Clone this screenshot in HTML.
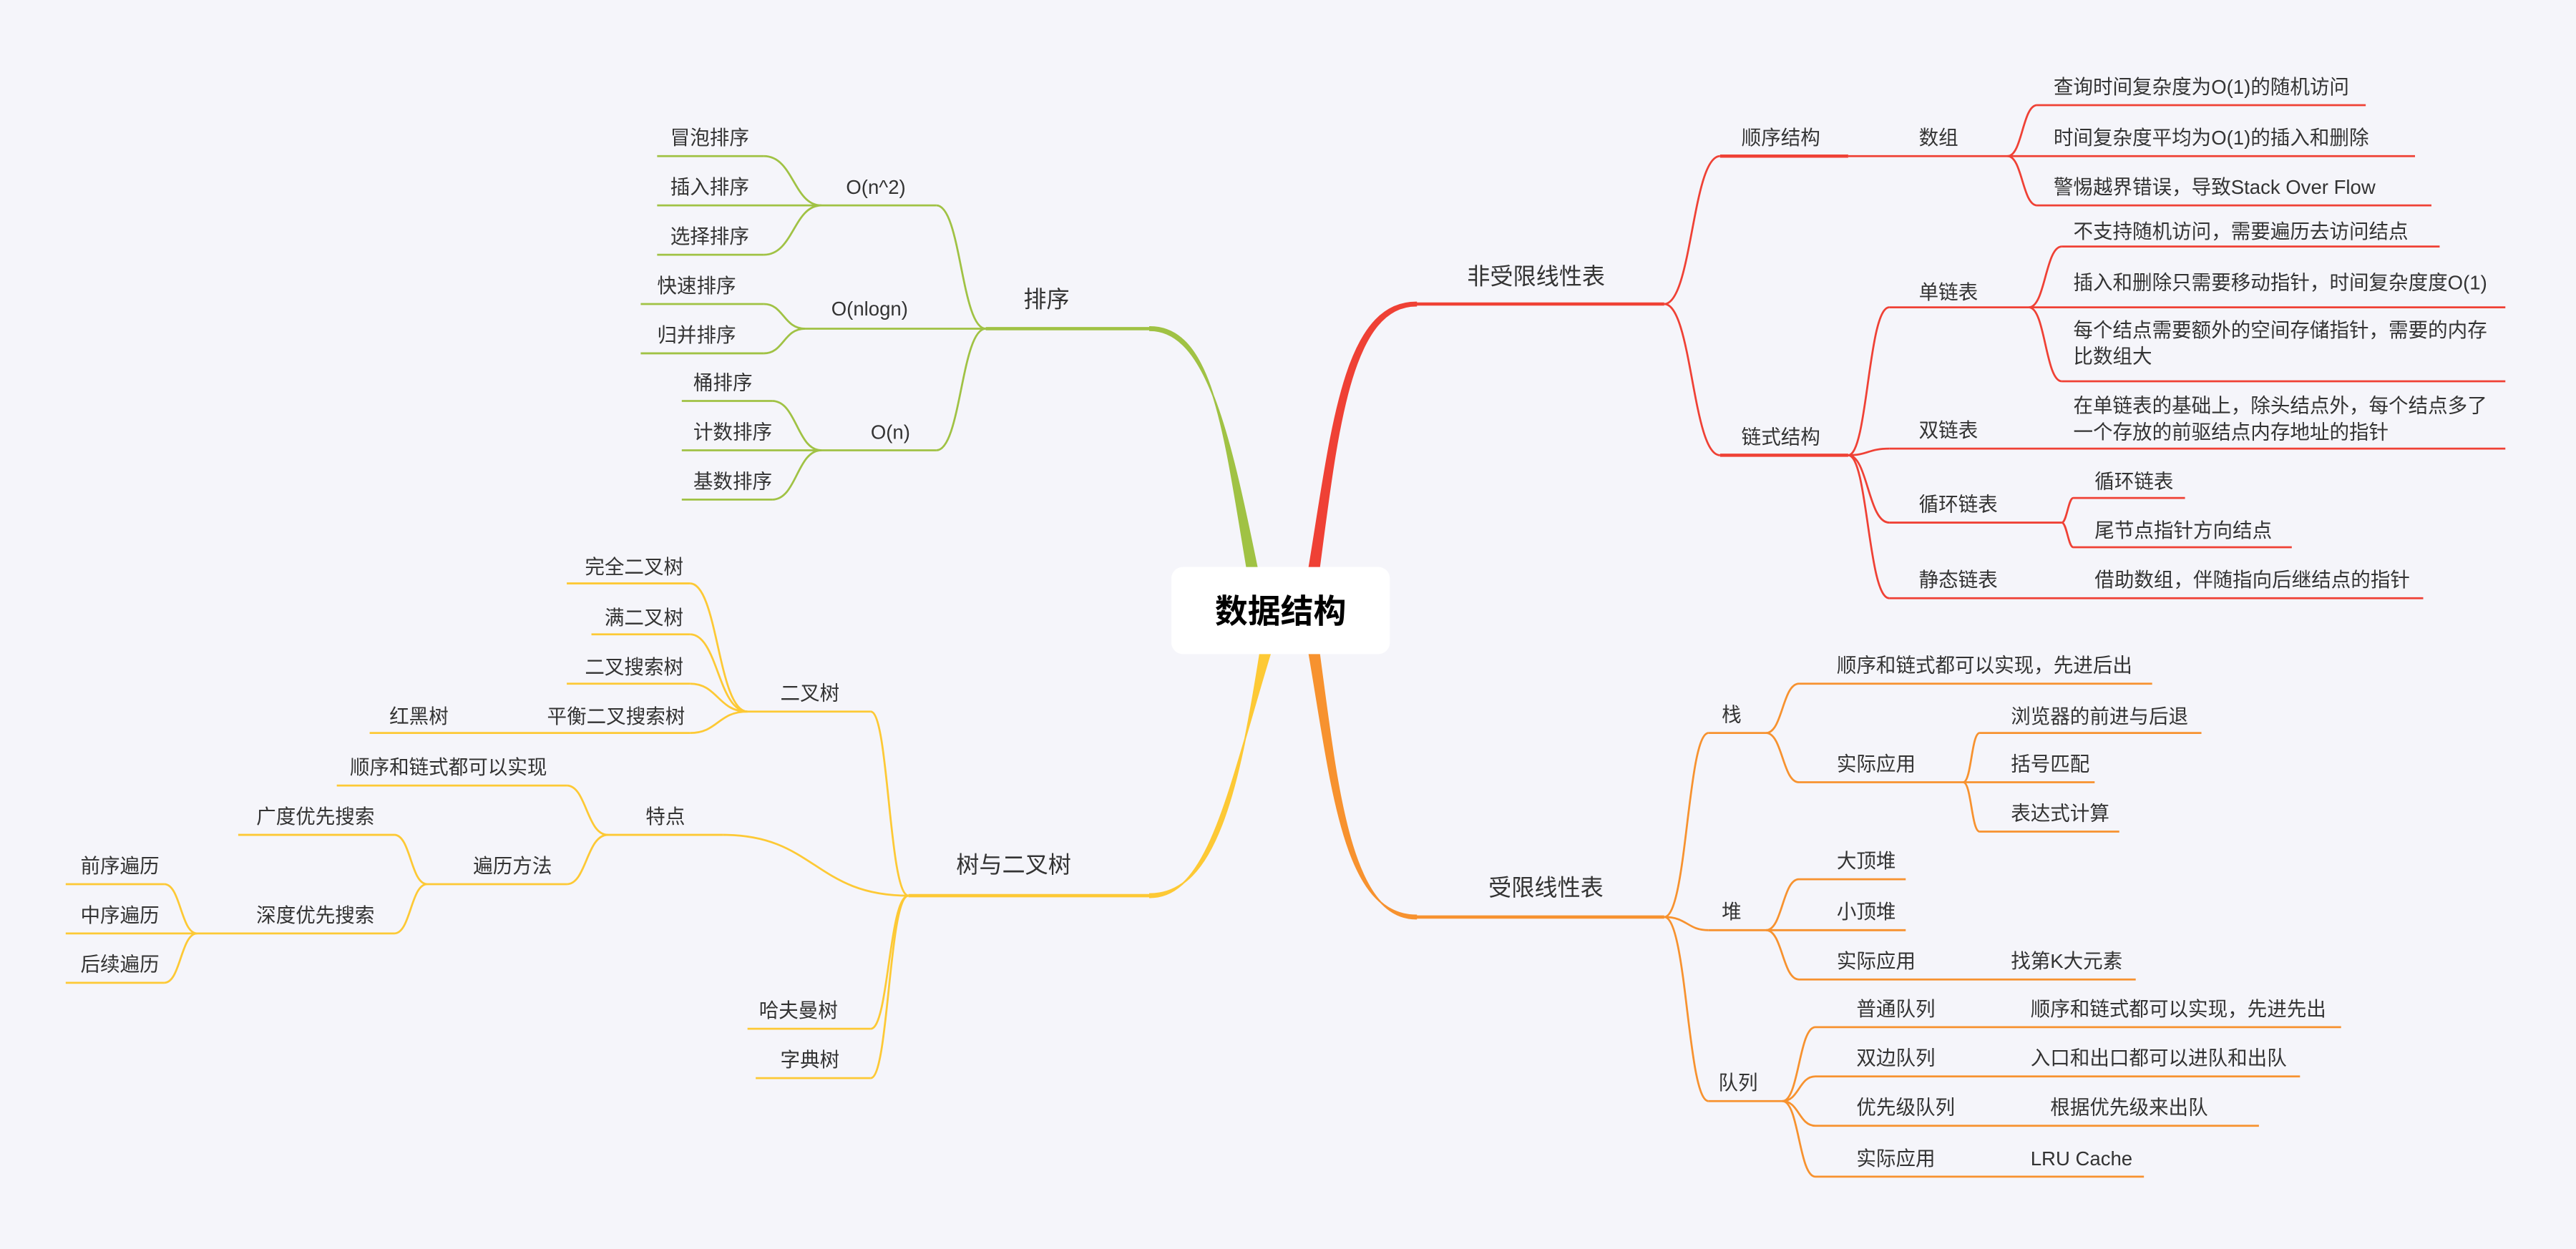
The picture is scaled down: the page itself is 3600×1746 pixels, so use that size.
<!DOCTYPE html>
<html><head><meta charset="utf-8"><style>
html,body{margin:0;padding:0;background:#f5f5fa;}
svg{display:block}
text{font-family:"Liberation Sans","Noto Sans CJK SC",sans-serif;font-size:12px;fill:#333}
.m{font-size:14px}
.r path,.r line{stroke:#ef4135}
.o path,.o line{stroke:#f7922f}
.g path,.g line{stroke:#a0c244}
.y path,.y line{stroke:#fdc935}
path,line{fill:none;stroke-width:1.2}
.t{stroke-width:2}
</style></head><body>
<svg width="3600" height="1746" viewBox="0 0 1568 760" preserveAspectRatio="none" xmlns="http://www.w3.org/2000/svg">
<rect width="1568" height="760" fill="#f5f5fa"/>

<!-- RED -->
<g class="r">
<path d="M797 345C811 260 818 184 862 184L862 186C822 186 814 262 803 345Z" style="fill:#ef4135;stroke-width:1"/>
<line class="t" x1="860" y1="185" x2="1013" y2="185"/>
<path d="M1013 185C1030 185 1030 95 1047 95"/>
<path d="M1013 185C1030 185 1030 277 1047 277"/>
<line class="t" x1="1047" y1="95" x2="1125" y2="95"/>
<line x1="1125" y1="95" x2="1222" y2="95"/>
<line class="t" x1="1047" y1="277" x2="1125" y2="277"/>
<path d="M1222 95C1231 95 1231 64 1240 64"/>
<path d="M1222 95C1231 95 1231 125 1240 125"/>
<line x1="1240" y1="64" x2="1440" y2="64"/>
<line x1="1222" y1="95" x2="1470" y2="95"/>
<line x1="1240" y1="125" x2="1480" y2="125"/>
<path d="M1125 277C1137 277 1137 187 1150 187"/>
<path d="M1125 277C1137 277 1137 273 1150 273"/>
<path d="M1125 277C1137 277 1137 318 1150 318"/>
<path d="M1125 277C1137 277 1137 364 1150 364"/>
<line x1="1150" y1="187" x2="1235" y2="187"/>
<line x1="1150" y1="273" x2="1525" y2="273"/>
<line x1="1150" y1="318" x2="1255" y2="318"/>
<line x1="1150" y1="364" x2="1475" y2="364"/>
<path d="M1235 187C1245 187 1245 150 1255 150"/>
<path d="M1235 187C1245 187 1245 232 1255 232"/>
<line x1="1255" y1="150" x2="1485" y2="150"/>
<line x1="1235" y1="187" x2="1525" y2="187"/>
<line x1="1255" y1="232" x2="1525" y2="232"/>
<path d="M1255 318C1258 318 1259 303 1262 303"/>
<path d="M1255 318C1258 318 1259 333 1262 333"/>
<line x1="1262" y1="303" x2="1330" y2="303"/>
<line x1="1262" y1="333" x2="1395" y2="333"/>
</g>

<!-- ORANGE -->
<g class="o">
<path d="M797 398C811 480 818 557 862 557L862 559C822 559 814 480 803 398Z" style="fill:#f7922f;stroke-width:1"/>
<line class="t" x1="860" y1="558" x2="1013" y2="558"/>
<path d="M1013 558C1027 558 1027 446 1040 446"/>
<path d="M1013 558C1027 558 1027 566 1040 566"/>
<path d="M1013 558C1027 558 1027 670 1040 670"/>
<line x1="1040" y1="446" x2="1075" y2="446"/>
<line x1="1040" y1="566" x2="1075" y2="566"/>
<line x1="1040" y1="670" x2="1085" y2="670"/>
<path d="M1075 446C1085 446 1085 416 1095 416"/>
<path d="M1075 446C1085 446 1085 476 1095 476"/>
<line x1="1095" y1="416" x2="1310" y2="416"/>
<line x1="1095" y1="476" x2="1275" y2="476"/>
<path d="M1195 476C1200 476 1200 446 1205 446"/>
<path d="M1195 476C1200 476 1200 506 1205 506"/>
<line x1="1205" y1="446" x2="1340" y2="446"/>
<line x1="1205" y1="506" x2="1290" y2="506"/>
<path d="M1075 566C1085 566 1085 535 1095 535"/>
<path d="M1075 566C1085 566 1085 596 1095 596"/>
<line x1="1095" y1="535" x2="1160" y2="535"/>
<line x1="1075" y1="566" x2="1160" y2="566"/>
<line x1="1095" y1="596" x2="1300" y2="596"/>
<path d="M1085 670C1095 670 1095 625 1105 625"/>
<path d="M1085 670C1095 670 1095 655 1105 655"/>
<path d="M1085 670C1095 670 1095 685 1105 685"/>
<path d="M1085 670C1095 670 1095 716 1105 716"/>
<line x1="1105" y1="625" x2="1425" y2="625"/>
<line x1="1105" y1="655" x2="1400" y2="655"/>
<line x1="1105" y1="685" x2="1375" y2="685"/>
<line x1="1105" y1="716" x2="1305" y2="716"/>
</g>

<!-- GREEN -->
<g class="g">
<path d="M759 345C745 262 738 199 700 199L700 201C734 201 748 262 765 345Z" style="fill:#a0c244;stroke-width:1"/>
<line class="t" x1="600" y1="200" x2="702" y2="200"/>
<path d="M600 200C585 200 585 125 570 125"/>
<path d="M600 200C585 200 585 274 570 274"/>
<line x1="500" y1="125" x2="570" y2="125"/>
<line x1="490" y1="200" x2="600" y2="200"/>
<line x1="500" y1="274" x2="570" y2="274"/>
<path d="M500 125C483 125 483 95 465 95"/>
<path d="M500 125C483 125 483 155 465 155"/>
<line x1="400" y1="95" x2="465" y2="95"/>
<line x1="400" y1="125" x2="500" y2="125"/>
<line x1="400" y1="155" x2="465" y2="155"/>
<path d="M490 200C477 200 477 185 465 185"/>
<path d="M490 200C477 200 477 215 465 215"/>
<line x1="390" y1="185" x2="465" y2="185"/>
<line x1="390" y1="215" x2="465" y2="215"/>
<path d="M500 274C485 274 485 244 470 244"/>
<path d="M500 274C485 274 485 304 470 304"/>
<line x1="415" y1="244" x2="470" y2="244"/>
<line x1="415" y1="274" x2="500" y2="274"/>
<line x1="415" y1="304" x2="470" y2="304"/>
</g>

<!-- YELLOW -->
<g class="y">
<path d="M767 398C754 480 740 544 700 544L700 546C736 546 748 480 773 398Z" style="fill:#fdc935;stroke-width:1"/>
<line class="t" x1="553" y1="545" x2="702" y2="545"/>
<path d="M553 545C541 545 541 433 530 433"/>
<path d="M553 545C496 545 496 508 440 508"/>
<path d="M553 545C541 545 541 626 530 626"/>
<path d="M553 545C541 545 541 656 530 656"/>
<line x1="455" y1="433" x2="530" y2="433"/>
<line x1="370" y1="508" x2="440" y2="508"/>
<line x1="455" y1="626" x2="530" y2="626"/>
<line x1="460" y1="656" x2="530" y2="656"/>
<path d="M455 433C437 433 437 355 420 355"/>
<path d="M455 433C437 433 437 386 420 386"/>
<path d="M455 433C437 433 437 416 420 416"/>
<path d="M455 433C437 433 437 446 420 446"/>
<line x1="345" y1="355" x2="420" y2="355"/>
<line x1="360" y1="386" x2="420" y2="386"/>
<line x1="345" y1="416" x2="420" y2="416"/>
<line x1="225" y1="446" x2="420" y2="446"/>
<path d="M370 508C357 508 357 478 345 478"/>
<path d="M370 508C357 508 357 538 345 538"/>
<line x1="205" y1="478" x2="345" y2="478"/>
<line x1="260" y1="538" x2="345" y2="538"/>
<path d="M260 538C250 538 250 508 240 508"/>
<path d="M260 538C250 538 250 568 240 568"/>
<line x1="145" y1="508" x2="240" y2="508"/>
<line x1="120" y1="568" x2="240" y2="568"/>
<path d="M120 568C110 568 110 538 100 538"/>
<path d="M120 568C110 568 110 598 100 598"/>
<line x1="40" y1="538" x2="100" y2="538"/>
<line x1="40" y1="568" x2="120" y2="568"/>
<line x1="40" y1="598" x2="100" y2="598"/>
</g>

<!-- center -->
<rect x="713" y="345" width="133" height="53" rx="7" fill="#fff"/>
<text x="779.5" y="379" text-anchor="middle" style="font-size:20px;font-weight:bold;fill:#000">数据结构</text>

<!-- red texts -->
<text class="m" x="893" y="173">非受限线性表</text>
<text x="1060" y="88">顺序结构</text>
<text x="1168" y="88">数组</text>
<text x="1250" y="57">查询时间复杂度为O(1)的随机访问</text>
<text x="1250" y="88">时间复杂度平均为O(1)的插入和删除</text>
<text x="1250" y="118">警惕越界错误，导致Stack Over Flow</text>
<text x="1060" y="270">链式结构</text>
<text x="1168" y="182">单链表</text>
<text x="1262" y="145">不支持随机访问，需要遍历去访问结点</text>
<text x="1262" y="176">插入和删除只需要移动指针，时间复杂度度O(1)</text>
<text x="1262" y="205">每个结点需要额外的空间存储指针，需要的内存</text>
<text x="1262" y="221">比数组大</text>
<text x="1168" y="266">双链表</text>
<text x="1262" y="251">在单链表的基础上，除头结点外，每个结点多了</text>
<text x="1262" y="267">一个存放的前驱结点内存地址的指针</text>
<text x="1168" y="311">循环链表</text>
<text x="1275" y="297">循环链表</text>
<text x="1275" y="327">尾节点指针方向结点</text>
<text x="1168" y="357">静态链表</text>
<text x="1275" y="357">借助数组，伴随指向后继结点的指针</text>

<!-- orange texts -->
<text class="m" x="906" y="545">受限线性表</text>
<text x="1048" y="439">栈</text>
<text x="1048" y="559">堆</text>
<text x="1046" y="663">队列</text>
<text x="1118" y="409">顺序和链式都可以实现，先进后出</text>
<text x="1118" y="469">实际应用</text>
<text x="1224" y="440">浏览器的前进与后退</text>
<text x="1224" y="469">括号匹配</text>
<text x="1224" y="499">表达式计算</text>
<text x="1118" y="528">大顶堆</text>
<text x="1118" y="559">小顶堆</text>
<text x="1118" y="589">实际应用</text>
<text x="1224" y="589">找第K大元素</text>
<text x="1130" y="618">普通队列</text>
<text x="1236" y="618">顺序和链式都可以实现，先进先出</text>
<text x="1130" y="648">双边队列</text>
<text x="1236" y="648">入口和出口都可以进队和出队</text>
<text x="1130" y="678">优先级队列</text>
<text x="1248" y="678">根据优先级来出队</text>
<text x="1130" y="709">实际应用</text>
<text x="1236" y="709">LRU Cache</text>

<!-- green texts -->
<text class="m" x="623" y="187">排序</text>
<text x="515" y="118">O(n^2)</text>
<text x="506" y="192">O(nlogn)</text>
<text x="530" y="267">O(n)</text>
<text x="408" y="88">冒泡排序</text>
<text x="408" y="118">插入排序</text>
<text x="408" y="148">选择排序</text>
<text x="400" y="178">快速排序</text>
<text x="400" y="208">归并排序</text>
<text x="422" y="237">桶排序</text>
<text x="422" y="267">计数排序</text>
<text x="422" y="297">基数排序</text>

<!-- yellow texts -->
<text class="m" x="582" y="531">树与二叉树</text>
<text x="475" y="426">二叉树</text>
<text x="393" y="501">特点</text>
<text x="462" y="619">哈夫曼树</text>
<text x="475" y="649">字典树</text>
<text x="356" y="349">完全二叉树</text>
<text x="368" y="380">满二叉树</text>
<text x="356" y="410">二叉搜索树</text>
<text x="333" y="440">平衡二叉搜索树</text>
<text x="237" y="440">红黑树</text>
<text x="213" y="471">顺序和链式都可以实现</text>
<text x="288" y="531">遍历方法</text>
<text x="156" y="501">广度优先搜索</text>
<text x="156" y="561">深度优先搜索</text>
<text x="49" y="531">前序遍历</text>
<text x="49" y="561">中序遍历</text>
<text x="49" y="591">后续遍历</text>
</svg>
</body></html>
